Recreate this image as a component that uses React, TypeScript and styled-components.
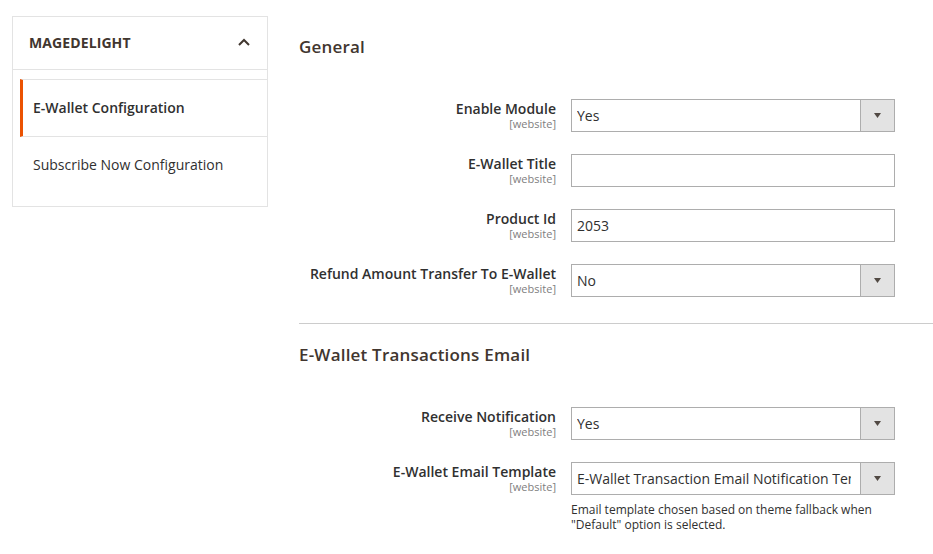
import styled, { createGlobalStyle } from "styled-components";

const GlobalStyle = createGlobalStyle`
    html, body {
        margin: 0;
        padding: 0;
        background: #ffffff;
    }

    body {
        font-family: "Open Sans", "Liberation Sans", sans-serif;
        color: #303030;
    }
`;

const Page = styled.div`
    display: flex;
    align-items: flex-start;
    gap: 31px;
    padding: 16px 0 0 12px;
`;

const Sidebar = styled.nav`
    width: 254px;
    flex-shrink: 0;
    border: 1px solid #e3e3e3;
    padding-bottom: 11px;
`;

const SidebarHeader = styled.div`
    box-sizing: border-box;
    display: flex;
    align-items: center;
    justify-content: space-between;
    height: 53px;
    padding: 0 17px 2px 16px;
    border-bottom: 1px solid #e3e3e3;
`;

const SidebarTitle = styled.span`
    font-size: 14px;
    font-weight: 700;
    color: #41362f;
    letter-spacing: 0.1px;
`;

const NavList = styled.ul`
    list-style: none;
    margin: 9px 0 0;
    padding: 0;
`;

const NavItem = styled.li<{ $active?: boolean }>`
    box-sizing: border-box;
    display: flex;
    align-items: center;
    height: 58px;
    margin-left: 7px;
    padding: 0 0 ${(p) => (p.$active ? "2px" : "4px")} 10px;
    border-left: 3px solid ${(p) => (p.$active ? "#eb5202" : "transparent")};
    border-top: ${(p) => (p.$active ? "1px solid #e3e3e3" : "none")};
    border-bottom: ${(p) => (p.$active ? "1px solid #e3e3e3" : "none")};
    font-size: 14px;
    font-weight: ${(p) => (p.$active ? 600 : 400)};
    color: #303030;
`;

const Main = styled.main`
    flex: 1;
    padding-top: 21px;
`;

const SectionTitle = styled.h2`
    margin: 0 0 42px;
    font-size: 17px;
    line-height: 20px;
    font-weight: 600;
    color: #41362f;
    letter-spacing: 0.2px;
`;

const Separator = styled.hr`
    margin: 26px 0 21px;
    border: none;
    border-top: 1px solid #cccccc;
`;

const FieldRow = styled.div`
    display: grid;
    grid-template-columns: 257px 324px;
    column-gap: 15px;
    align-items: start;
    margin-bottom: 22px;
`;

const LabelCell = styled.div`
    display: flex;
    flex-direction: column;
    align-items: flex-end;
    text-align: right;
`;

const LabelText = styled.span`
    font-size: 14px;
    line-height: 18px;
    padding-top: 1px;
    font-weight: 600;
    color: #303030;
`;

const Scope = styled.span`
    font-size: 11px;
    line-height: 12px;
    color: #808080;
`;

const ControlCell = styled.div`
    display: flex;
    flex-direction: column;
`;

const TextInput = styled.div`
    box-sizing: border-box;
    height: 33px;
    display: flex;
    align-items: center;
    padding: 0 5px;
    border: 1px solid #adadad;
    background: #ffffff;
    font-size: 14px;
    color: #303030;
`;

const SelectBox = styled.div`
    box-sizing: border-box;
    height: 33px;
    display: flex;
    border: 1px solid #adadad;
    background: #ffffff;
`;

const SelectValue = styled.span`
    flex: 1;
    min-width: 0;
    display: flex;
    align-items: center;
    margin: 0 9px 0 5px;
    overflow: hidden;
    white-space: nowrap;
    font-size: 14px;
    color: #303030;
`;

const SelectButton = styled.span`
    width: 33px;
    flex-shrink: 0;
    display: flex;
    align-items: center;
    justify-content: center;
    border-left: 1px solid #adadad;
    background: #e3e3e3;
`;

const Note = styled.p`
    margin: 7px 0 0;
    font-size: 12px;
    line-height: 15px;
    color: #303030;
`;

type Field = {
    label: string;
    kind: "select" | "text";
    value: string;
    note?: string;
};

const generalFields: Field[] = [
    { label: "Enable Module", kind: "select", value: "Yes" },
    { label: "E-Wallet Title", kind: "text", value: "" },
    { label: "Product Id", kind: "text", value: "2053" },
    { label: "Refund Amount Transfer To E-Wallet", kind: "select", value: "No" },
];

const emailFields: Field[] = [
    { label: "Receive Notification", kind: "select", value: "Yes" },
    {
        label: "E-Wallet Email Template",
        kind: "select",
        value: "E-Wallet Transaction Email Notification Template (Default)",
        note: 'Email template chosen based on theme fallback when "Default" option is selected.',
    },
];

const ChevronUp = () => (
    <svg width="12" height="8" viewBox="0 0 12 8" fill="none">
        <path d="M1 7 L6 2 L11 7" stroke="#41362f" strokeWidth="2" />
    </svg>
);

const CaretDown = () => (
    <svg width="7" height="5" viewBox="0 0 7 5">
        <path d="M0 0 H7 L3.5 5 Z" fill="#514943" />
    </svg>
);

const FieldControl = ({ field }: { field: Field }) =>
    field.kind === "select" ? (
        <SelectBox>
            <SelectValue>{field.value}</SelectValue>
            <SelectButton>
                <CaretDown />
            </SelectButton>
        </SelectBox>
    ) : (
        <TextInput>{field.value}</TextInput>
    );

const FieldList = ({ fields }: { fields: Field[] }) => (
    <>
        {fields.map((field) => (
            <FieldRow key={field.label}>
                <LabelCell>
                    <LabelText>{field.label}</LabelText>
                    <Scope>[website]</Scope>
                </LabelCell>
                <ControlCell>
                    <FieldControl field={field} />
                    {field.note && <Note>{field.note}</Note>}
                </ControlCell>
            </FieldRow>
        ))}
    </>
);

const App = () => {
    return (
        <>
            <GlobalStyle />
            <Page>
                <Sidebar>
                    <SidebarHeader>
                        <SidebarTitle>MAGEDELIGHT</SidebarTitle>
                        <ChevronUp />
                    </SidebarHeader>
                    <NavList>
                        <NavItem $active>E-Wallet Configuration</NavItem>
                        <NavItem>Subscribe Now Configuration</NavItem>
                    </NavList>
                </Sidebar>
                <Main>
                    <SectionTitle>General</SectionTitle>
                    <FieldList fields={generalFields} />
                    <Separator />
                    <SectionTitle>E-Wallet Transactions Email</SectionTitle>
                    <FieldList fields={emailFields} />
                </Main>
            </Page>
        </>
    );
};

export default App;
